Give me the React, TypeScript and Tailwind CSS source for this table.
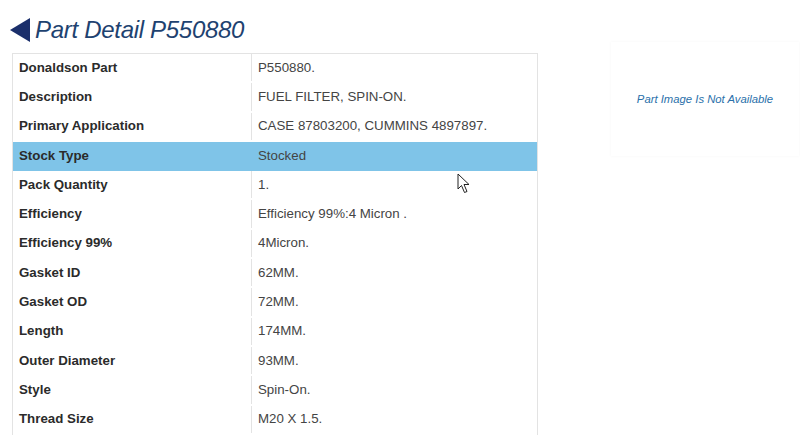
import React from 'react'

const rows: [string, string][] = [
  ['Donaldson Part', 'P550880.'],
  ['Description', 'FUEL FILTER, SPIN-ON.'],
  ['Primary Application', 'CASE 87803200, CUMMINS 4897897.'],
  ['Stock Type', 'Stocked'],
  ['Pack Quantity', '1.'],
  ['Efficiency', 'Efficiency 99%:4 Micron .'],
  ['Efficiency 99%', '4Micron.'],
  ['Gasket ID', '62MM.'],
  ['Gasket OD', '72MM.'],
  ['Length', '174MM.'],
  ['Outer Diameter', '93MM.'],
  ['Style', 'Spin-On.'],
  ['Thread Size', 'M20 X 1.5.'],
]

export default function App() {
  return (
    <div className="relative w-[800px] h-[437px] overflow-hidden bg-white font-['Liberation_Sans',Arial,sans-serif]">
      <div className="flex items-center h-[52px] pl-[10px] pt-[8px]">
        <svg width="20" height="24" viewBox="0 0 20 24" className="mr-[5px]">
          <polygon points="20,0 20,24 0,12" fill="#1b2f6b" />
        </svg>
        <h1 className="italic text-[24px] leading-none text-[#1e4270] tracking-[-0.3px]">Part Detail P550880</h1>
      </div>

      <div className="flex items-start">
        <div className="ml-[12px] mt-[1px] w-[526px] border-l border-r border-t border-[#e3e3e3]">
          {rows.map(([label, value]) => {
            const hi = label === 'Stock Type'
            return (
              <div key={label} className={`flex h-[29.3px] text-[13.3px] pb-[2px] ${hi ? 'bg-[#7fc4e8]' : ''}`}>
                <div className="w-[238px] pl-[6px] flex items-center font-bold text-[#2b2b2b]">{label}</div>
                <div className={`flex-1 pl-[6px] flex items-center border-l text-[#444] ${hi ? 'border-transparent' : 'border-[#e3e3e3]'}`}>{value}</div>
              </div>
            )
          })}
        </div>

        <div className="ml-[73px] -mt-[10px] w-[188px] h-[114px] flex items-center justify-center bg-white shadow-[0_0_3px_rgba(0,0,0,0.04)]">
          <span className="italic text-[11.3px] text-[#2a70aa]">Part Image Is Not Available</span>
        </div>
      </div>

      <svg className="absolute left-[457px] top-[173px]" width="14" height="22" viewBox="0 0 14 22">
        <path d="M1 1 L1 16 L4.5 12.5 L7.5 19.5 L10 18.5 L7 11.5 L12 11.5 Z" fill="white" stroke="#222" strokeWidth="1" strokeLinejoin="round" />
      </svg>
    </div>
  )
}
